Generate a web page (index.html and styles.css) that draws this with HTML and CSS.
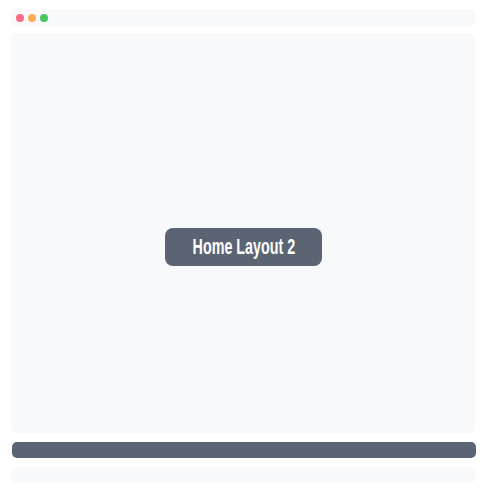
FILE: index.html
```html
<!DOCTYPE html>
<html>
<head>
<meta charset="utf-8">
<link rel="stylesheet" href="styles.css">
</head>
<body>
<div class="page">
  <div class="topbar">
    <span class="dot red"></span>
    <span class="dot orange"></span>
    <span class="dot green"></span>
  </div>
  <div class="main">
    <div class="btn"><span class="label">Home Layout 2</span></div>
  </div>
  <div class="darkbar"></div>
  <div class="footbar"></div>
</div>
</body>
</html>
```
FILE: styles.css
```css
html, body {
  margin: 0;
  padding: 0;
  background: #ffffff;
}
.page {
  width: 486px;
  height: 493px;
  box-sizing: border-box;
  padding: 9px 11px 0 11px;
  display: flex;
  flex-direction: column;
}
.topbar {
  height: 17px;
  width: 464px;
  background: #f8f9fb;
  border-radius: 5px;
  display: flex;
  align-items: center;
  gap: 4px;
  padding-left: 5px;
  box-sizing: border-box;
}
.dot {
  width: 8px;
  height: 8px;
  border-radius: 50%;
}
.red { background: #fa6b86; }
.orange { background: #fdac55; }
.green { background: #4cc565; }
.main {
  margin-top: 7px;
  height: 400px;
  width: 464px;
  background: #f8f9fb;
  border-radius: 6px;
  display: flex;
  align-items: center;
  justify-content: center;
}
.btn {
  flex: none;
  width: 157px;
  height: 38px;
  margin-top: 28px;
  margin-left: 1px;
  background: #5a6473;
  border-radius: 8px;
  display: flex;
  align-items: center;
  justify-content: center;
}
.label {
  display: inline-block;
  color: #ffffff;
  font-family: "Liberation Sans", Arial, sans-serif;
  font-weight: bold;
  font-size: 22px;
  line-height: 22px;
  white-space: nowrap;
  transform: scaleX(0.65);
  margin-top: -1px;
}
.darkbar {
  margin-top: 9px;
  margin-left: 1px;
  height: 16px;
  width: 464px;
  background: #5a6473;
  border-radius: 5px;
}
.footbar {
  margin-top: 9px;
  height: 16px;
  width: 464px;
  background: #f8f9fb;
  border-radius: 5px;
}
```
